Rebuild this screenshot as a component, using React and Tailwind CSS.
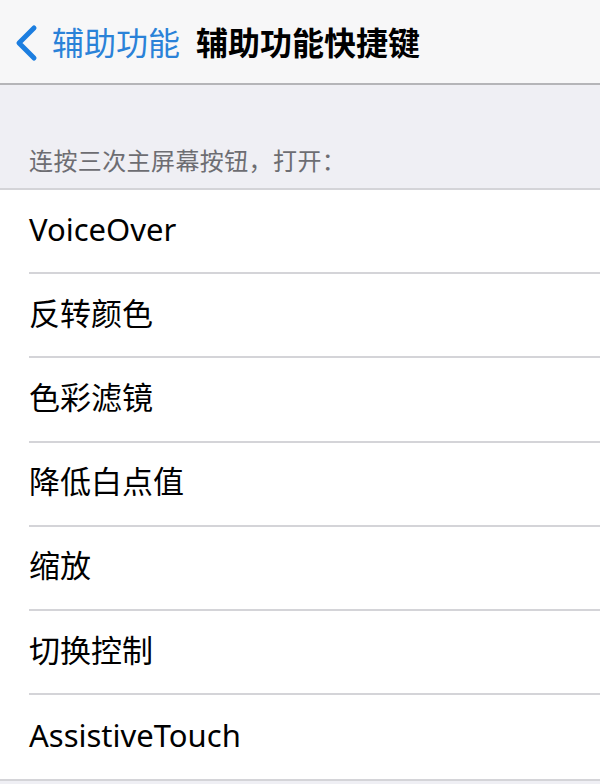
export default function App() {
  const items = ["VoiceOver", "反转颜色", "色彩滤镜", "降低白点值", "缩放", "切换控制", "AssistiveTouch"];
  const font = { fontFamily: '"Noto Sans", "Noto Sans CJK SC", sans-serif' };
  return (
    <div className="w-[600px] h-[784px] bg-[#efeff4] overflow-hidden" style={font}>
      <div className="h-[85px] bg-[#f7f7f8] border-b-2 border-[#b5b5b8] flex items-center">
        <svg width="26" height="38" viewBox="0 0 26 38" className="ml-[14px] mt-[2px]">
          <path d="M20 4 L5 19 L20 34" fill="none" stroke="#1c7ee0" strokeWidth="5" strokeLinecap="round" strokeLinejoin="round" />
        </svg>
        <span className="ml-[12px] text-[32px] text-[#2a82d8] leading-none mt-[2px]">辅助功能</span>
        <span className="ml-[16px] text-[32px] font-bold text-black leading-none mt-[2px]">辅助功能快捷键</span>
      </div>
      <div className="h-[103px] flex items-end pb-[15px] pl-[29px]">
        <span className="text-[24px] text-[#6d6d72] leading-none tracking-[0.4px]">连按三次主屏幕按钮，打开：</span>
      </div>
      <div className="bg-white border-t-2 border-b-2 border-[#d4d4d8]">
        {items.map((t, i) => (
          <div key={t} className="pl-[29px]">
            <div className={"h-[84.2px] flex items-center text-[31px] text-black leading-none " + (i < items.length - 1 ? "border-b-2 border-[#d4d4d8]" : "")}>
              <span className="mt-[-4px]">{t}</span>
            </div>
          </div>
        ))}
      </div>
    </div>
  );
}
